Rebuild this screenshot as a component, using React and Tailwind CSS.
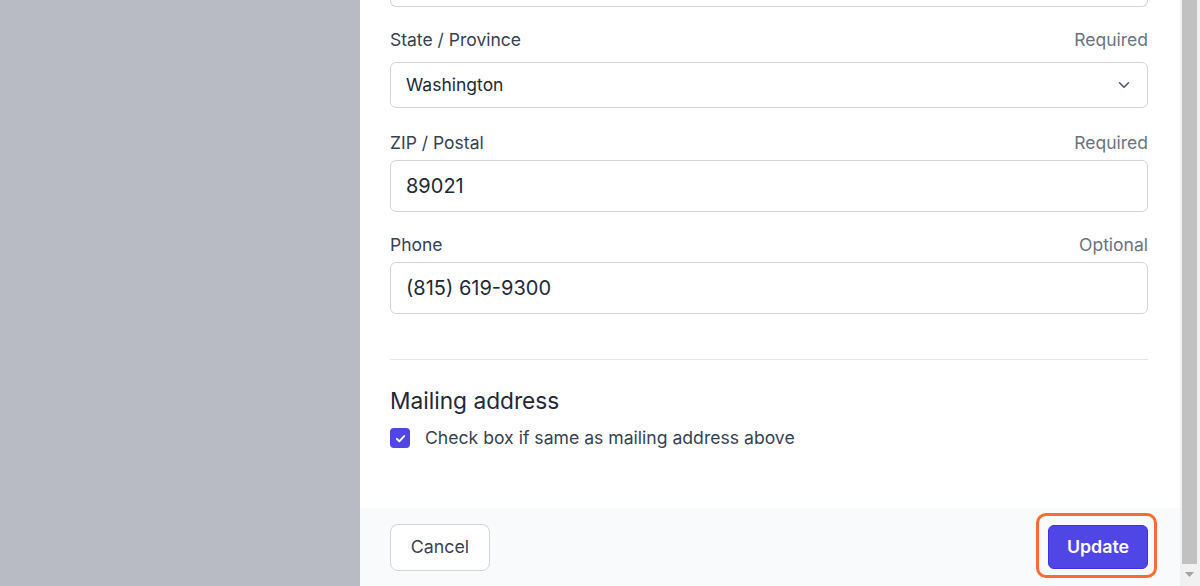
import React from "react";

function LabelRow({ label, hint, className = "" }) {
  return (
    <div className={`flex h-[24px] items-center justify-between text-[17.5px] leading-[24px] ${className}`}>
      <span className="text-[#374151]">{label}</span>
      <span className="text-[#6b7280]">{hint}</span>
    </div>
  );
}

export default function App() {
  return (
    <div
      className="flex h-[586px] w-[1200px] overflow-hidden"
      style={{ fontFamily: "Inter, 'Noto Sans', sans-serif" }}
    >
      <div className="w-[360px] shrink-0 bg-[#b8bbc3]" />
      <div className="flex w-[820px] shrink-0 flex-col bg-white">
        <div className="flex-1 px-[30px]">
          <div className="h-[7px] w-[758px] rounded-b-[6px] border-x border-b border-[#d1d5db]" />
          <LabelRow label="State / Province" hint="Required" className="mt-[21px] w-[758px]" />
          <div className="mt-[10px] flex h-[46px] w-[758px] items-center justify-between rounded-[6px] border border-[#d1d5db] px-[15px] text-[17.5px] text-[#1f2937]">
            <span>Washington</span>
            <svg width="18" height="18" viewBox="0 0 20 20" fill="none" className="mr-[-1px]">
              <path d="M5 7.5l5 5 5-5" stroke="#4b5563" strokeWidth="1.7" strokeLinecap="round" strokeLinejoin="round" />
            </svg>
          </div>
          <LabelRow label="ZIP / Postal" hint="Required" className="mt-[23px] w-[758px]" />
          <div className="mt-[5px] flex h-[52px] w-[758px] items-center rounded-[6px] border border-[#d1d5db] px-[15px] text-[20px] text-[#1f2937]">
            89021
          </div>
          <LabelRow label="Phone" hint="Optional" className="mt-[21px] w-[758px]" />
          <div className="mt-[5px] flex h-[52px] w-[758px] items-center rounded-[6px] border border-[#d1d5db] px-[15px] text-[20px] text-[#1f2937]">
            (815) 619-9300
          </div>
          <div className="mt-[45px] h-px w-[758px] bg-[#e5e7eb]" />
          <div className="mt-[27px] text-[22.7px] leading-[28px] text-[#1f2937]">Mailing address</div>
          <div className="mt-[11px] flex h-[24px] items-center gap-[15px]">
            <span className="flex h-[20px] w-[20px] items-center justify-center rounded-[4px] bg-[#4f46e5]">
              <svg width="13" height="13" viewBox="0 0 16 16" fill="none">
                <path d="M3.5 8.5l3 3 6-6.5" stroke="white" strokeWidth="2.4" strokeLinecap="round" strokeLinejoin="round" />
              </svg>
            </span>
            <span className="text-[17.6px] text-[#374151]">Check box if same as mailing address above</span>
          </div>
        </div>
        <div className="flex h-[78px] items-center justify-between bg-[#f9fafb] pl-[30px] pr-[32px]">
          <button className="h-[47px] w-[100px] rounded-[8px] border border-[#d1d5db] bg-white text-[17.8px] text-[#374151]">
            Cancel
          </button>
          <div className="relative">
            <span className="absolute -bottom-[9px] -left-[12px] -right-[9px] -top-[12px] rounded-[10px] border-[3px] border-[#fa6a35]" />
            <button className="relative h-[44px] w-[100px] rounded-[6px] border border-[#3f30e0] bg-[#4f46e5] text-[17.8px] font-semibold text-white">
              Update
            </button>
          </div>
        </div>
      </div>
      <div className="flex w-[20px] shrink-0 flex-col bg-[#f1f1f1] pl-[2px] pr-[3px]">
        <div className="mt-0 h-[564px] w-[15px] bg-[#c1c1c1]" />
        <div className="flex flex-1 items-center justify-center">
          <svg width="9" height="6" viewBox="0 0 9 6">
            <path d="M0 0h9L4.5 5z" fill="#a3a3a3" />
          </svg>
        </div>
      </div>
    </div>
  );
}
